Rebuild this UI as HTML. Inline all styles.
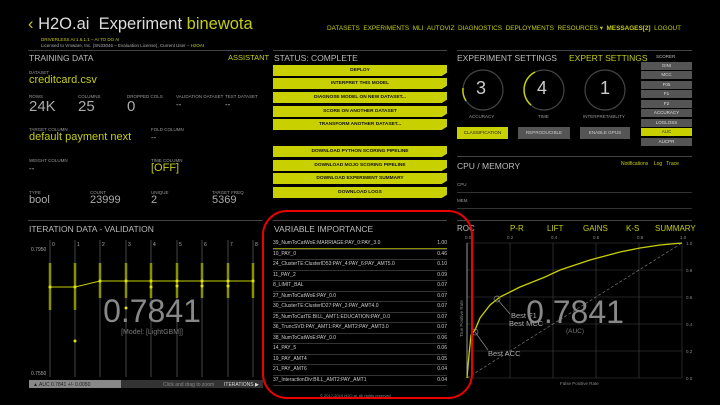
<!DOCTYPE html>
<html><head><meta charset="utf-8"><style>
*{margin:0;padding:0;box-sizing:border-box}
body{width:720px;height:405px;background:#000;overflow:hidden;position:relative;font-family:"Liberation Sans",sans-serif;color:#bbb}
.a{position:absolute;white-space:nowrap}
.y{color:#c5cc14}
.t{font-size:4.5px;color:#999}
.v{font-size:15px;color:#aaa}
.h{font-size:8.5px;color:#bbb}
.sep{position:absolute;height:1px;background:#444}
.btn{position:absolute;left:273px;width:174px;height:11px;background:#c8d000;color:#111;font-size:4.8px;font-weight:bold;text-align:center;line-height:11px;clip-path:polygon(0 0,100% 0,100% 70%,97% 100%,0 100%)}
.sc{position:absolute;left:641px;width:51px;height:8px;background:#555;color:#ddd;font-size:4.5px;text-align:center;line-height:8px}
.vr{position:absolute;left:273px;width:174px;font-size:5px;color:#ccc;border-bottom:1px solid #333;height:10.5px;line-height:9px}
.vr span{position:absolute;right:0}
</style></head><body>
<div class="a" style="left:28px;top:15px;font-size:16.5px;color:#ddd"><span class="y">‹</span> H2O.ai &nbsp;Experiment <span class="y">binewota</span></div>
<div class="a y" style="left:41px;top:37px;font-size:4.5px">DRIVERLESS AI 1.6.1.1 – AI TO DO AI</div>
<div class="a" style="left:41px;top:43px;font-size:4.5px;color:#aaa">Licensed to Vmware, Inc. (SN33046 – Evaluation License), Current User – <span class="y">H2OAI</span></div>
<div class="a y" style="left:327px;top:24px;font-size:6.4px">DATASETS &nbsp;EXPERIMENTS &nbsp;MLI &nbsp;AUTOVIZ &nbsp;DIAGNOSTICS &nbsp;DEPLOYMENTS &nbsp;RESOURCES ▾ &nbsp;<b>MESSAGES[2]</b> &nbsp;LOGOUT</div>

<div class="sep" style="left:28px;top:50px;width:235px"></div>
<div class="a h" style="left:29px;top:53px">TRAINING DATA</div>
<div class="a y" style="left:228px;top:53px;font-size:7.5px">ASSISTANT</div>
<div class="a t" style="left:29px;top:70px">DATASET</div>
<div class="a y" style="left:29px;top:74px;font-size:11px">creditcard.csv</div>
<div class="a t" style="left:29px;top:94px">ROWS</div><div class="a v" style="left:29px;top:98px">24K</div>
<div class="a t" style="left:78px;top:94px">COLUMNS</div><div class="a v" style="left:78px;top:98px">25</div>
<div class="a t" style="left:127px;top:94px">DROPPED COLS</div><div class="a v y" style="left:127px;top:98px">0</div>
<div class="a t" style="left:176px;top:94px">VALIDATION DATASET</div><div class="a" style="left:176px;top:100px;font-size:8px">--</div>
<div class="a t" style="left:225px;top:94px">TEST DATASET</div><div class="a" style="left:225px;top:100px;font-size:8px">--</div>
<div class="a t" style="left:29px;top:127px">TARGET COLUMN</div>
<div class="a y" style="left:29px;top:131px;font-size:11px">default payment next</div>
<div class="a t" style="left:151px;top:127px">FOLD COLUMN</div><div class="a" style="left:151px;top:133px;font-size:8px">--</div>
<div class="a t" style="left:29px;top:158px">WEIGHT COLUMN</div><div class="a" style="left:29px;top:164px;font-size:8px">--</div>
<div class="a t" style="left:151px;top:158px">TIME COLUMN</div><div class="a y" style="left:151px;top:162px;font-size:11px">[OFF]</div>
<div class="a t" style="left:29px;top:190px">TYPE</div><div class="a" style="left:29px;top:194px;font-size:11px;color:#aaa">bool</div>
<div class="a t" style="left:90px;top:190px">COUNT</div><div class="a" style="left:90px;top:194px;font-size:11px;color:#aaa">23999</div>
<div class="a t" style="left:151px;top:190px">UNIQUE</div><div class="a" style="left:151px;top:194px;font-size:11px;color:#aaa">2</div>
<div class="a t" style="left:212px;top:190px">TARGET FREQ</div><div class="a" style="left:212px;top:194px;font-size:11px;color:#aaa">5369</div>

<div class="sep" style="left:273px;top:50px;width:174px"></div>
<div class="a h" style="left:274px;top:53px">STATUS: COMPLETE</div>
<div class="btn" style="top:65px">DEPLOY</div>
<div class="btn" style="top:78px">INTERPRET THIS MODEL</div>
<div class="btn" style="top:92px">DIAGNOSE MODEL ON NEW DATASET...</div>
<div class="btn" style="top:106px">SCORE ON ANOTHER DATASET</div>
<div class="btn" style="top:119px">TRANSFORM ANOTHER DATASET...</div>
<div class="btn" style="top:146px">DOWNLOAD PYTHON SCORING PIPELINE</div>
<div class="btn" style="top:160px">DOWNLOAD MOJO SCORING PIPELINE</div>
<div class="btn" style="top:173px">DOWNLOAD EXPERIMENT SUMMARY</div>
<div class="btn" style="top:187px">DOWNLOAD LOGS</div>

<div class="sep" style="left:457px;top:50px;width:235px"></div>
<div class="a h" style="left:457px;top:53px">EXPERIMENT SETTINGS</div>
<div class="a y" style="left:569px;top:53px;font-size:8.5px">EXPERT SETTINGS</div>
<svg class="a" style="left:0;top:0" width="720" height="405">
<circle cx="483" cy="90" r="20" fill="none" stroke="#444" stroke-width="1.2"/>
<circle cx="544" cy="90" r="20" fill="none" stroke="#444" stroke-width="1.2"/>
<circle cx="605" cy="90" r="20" fill="none" stroke="#444" stroke-width="1.2"/>
<path d="M463 88 A20 20 0 0 0 466 101" fill="none" stroke="#c8d000" stroke-width="1.5"/>
<path d="M535 72 A20 20 0 0 0 531 105" fill="none" stroke="#c8d000" stroke-width="1.5"/>
</svg>
<div class="a" style="left:476px;top:78px;font-size:18px;color:#ccc">3</div>
<div class="a" style="left:537px;top:78px;font-size:18px;color:#ccc">4</div>
<div class="a" style="left:600px;top:78px;font-size:18px;color:#ccc">1</div>
<div class="a t" style="left:469px;top:114px">ACCURACY</div>
<div class="a t" style="left:538px;top:114px">TIME</div>
<div class="a t" style="left:583px;top:114px">INTERPRETABILITY</div>
<div class="a" style="left:457px;top:127px;width:51px;height:12px;background:#c8d000;color:#222;font-size:4.6px;text-align:center;line-height:12px">CLASSIFICATION</div>
<div class="a" style="left:518px;top:127px;width:52px;height:12px;background:#555;color:#ccc;font-size:4.6px;text-align:center;line-height:12px">REPRODUCIBLE</div>
<div class="a" style="left:580px;top:127px;width:50px;height:12px;background:#555;color:#ccc;font-size:4.6px;text-align:center;line-height:12px">ENABLE GPUS</div>
<div class="a t" style="left:656px;top:54px;color:#bbb">SCORER</div>
<div class="sc" style="top:62px">GINI</div>
<div class="sc" style="top:71px">MCC</div>
<div class="sc" style="top:81px">F05</div>
<div class="sc" style="top:90px">F1</div>
<div class="sc" style="top:100px">F2</div>
<div class="sc" style="top:109px">ACCURACY</div>
<div class="sc" style="top:119px">LOGLOSS</div>
<div class="sc" style="top:128px;background:#c8d000;color:#333">AUC</div>
<div class="sc" style="top:138px">AUCPR</div>

<div class="sep" style="left:457px;top:156px;width:235px"></div>
<div class="a h" style="left:457px;top:161px">CPU / MEMORY</div>
<div class="a y" style="left:621px;top:161px;font-size:5px">Notifications &nbsp;&nbsp;&nbsp;Log &nbsp;&nbsp;Trace</div>
<div class="a t" style="left:457px;top:182px">CPU</div>
<div class="sep" style="left:457px;top:192px;width:235px;background:#333"></div>
<div class="a t" style="left:457px;top:198px">MEM</div>
<div class="sep" style="left:457px;top:208px;width:235px;background:#333"></div>

<div class="sep" style="left:28px;top:220px;width:235px"></div>
<div class="a h" style="left:29px;top:224px">ITERATION DATA - VALIDATION</div>
<div class="sep" style="left:273px;top:220px;width:174px"></div>
<div class="a h" style="left:274px;top:224px">VARIABLE IMPORTANCE</div>
<div class="sep" style="left:457px;top:220px;width:235px"></div>

<svg class="a" style="left:0;top:0" width="720" height="405">
<g stroke="#555" stroke-width="0.8">
<line x1="50" y1="240" x2="50" y2="377"/><line x1="75" y1="240" x2="75" y2="377"/><line x1="100" y1="240" x2="100" y2="377"/><line x1="126" y1="240" x2="126" y2="377"/><line x1="151" y1="240" x2="151" y2="377"/><line x1="177" y1="240" x2="177" y2="377"/><line x1="202" y1="240" x2="202" y2="377"/><line x1="228" y1="240" x2="228" y2="377"/><line x1="253" y1="240" x2="253" y2="377"/>
</g>
<g fill="#aaa" font-size="5" font-family="Liberation Sans">
<text x="52" y="246">0</text><text x="77" y="246">1</text><text x="102" y="246">2</text><text x="128" y="246">3</text><text x="153" y="246">4</text><text x="179" y="246">5</text><text x="204" y="246">6</text><text x="230" y="246">7</text><text x="255" y="246">8</text>
<text x="31" y="251">0.7950</text><text x="31" y="375">0.7550</text>
</g>
<g stroke="#8a8f00" stroke-width="2.5">
<line x1="50" y1="263" x2="50" y2="310"/><line x1="75" y1="263" x2="75" y2="310"/><line x1="100" y1="263" x2="100" y2="298"/><line x1="126" y1="263" x2="126" y2="298"/><line x1="151" y1="263" x2="151" y2="298"/><line x1="177" y1="263" x2="177" y2="298"/><line x1="202" y1="263" x2="202" y2="298"/><line x1="228" y1="263" x2="228" y2="298"/><line x1="253" y1="263" x2="253" y2="298"/>
</g>
<polyline points="50,287 75,287 100,281 126,281 151,281 177,281 202,281 228,281 253,281" fill="none" stroke="#c8d000" stroke-width="1"/>
<g fill="#e0e600"><circle cx="50" cy="287" r="1.5"/><circle cx="75" cy="287" r="1.5"/><circle cx="100" cy="281" r="1.5"/><circle cx="126" cy="281" r="1.5"/><circle cx="151" cy="281" r="1.5"/><circle cx="151" cy="287" r="1.5"/><circle cx="177" cy="281" r="1.5"/><circle cx="177" cy="286" r="1.5"/><circle cx="202" cy="281" r="1.5"/><circle cx="202" cy="286" r="1.5"/><circle cx="228" cy="281" r="1.5"/><circle cx="228" cy="286" r="1.5"/><circle cx="253" cy="281" r="1.5"/><circle cx="126" cy="308" r="1.5"/><circle cx="75" cy="341" r="1.5"/></g>
<text x="152" y="322" text-anchor="middle" font-size="32" fill="#888" font-family="Liberation Sans">0.7841</text>
<text x="152" y="334" text-anchor="middle" font-size="7" fill="#777" font-family="Liberation Sans">[Model: [LightGBM]]</text>
<rect x="29" y="380" width="92" height="8" fill="#888"/>
<rect x="121" y="380" width="142" height="8" fill="#333"/>
<text x="33" y="386" font-size="5" fill="#222" font-family="Liberation Sans">▲ AUC 0.7841 +/- 0.0050</text>
<text x="163" y="386" font-size="5" fill="#888" font-family="Liberation Sans">Click and drag to zoom</text>
<text x="224" y="386" font-size="5" fill="#ddd" font-family="Liberation Sans">ITERATIONS ▶</text>

<g stroke="#444" stroke-width="0.6">
<line x1="467" y1="243" x2="467" y2="378"/><line x1="510" y1="243" x2="510" y2="378"/><line x1="553" y1="243" x2="553" y2="378"/><line x1="596" y1="243" x2="596" y2="378"/><line x1="639" y1="243" x2="639" y2="378"/><line x1="682" y1="243" x2="682" y2="378"/>
<line x1="467" y1="243" x2="682" y2="243"/><line x1="467" y1="270" x2="682" y2="270"/><line x1="467" y1="297" x2="682" y2="297"/><line x1="467" y1="324" x2="682" y2="324"/><line x1="467" y1="351" x2="682" y2="351"/><line x1="467" y1="378" x2="682" y2="378"/>
</g>
<line x1="467" y1="378" x2="682" y2="243" stroke="#777" stroke-width="0.7" stroke-dasharray="3,2"/>
<line x1="467" y1="243" x2="467" y2="378" stroke="#999" stroke-width="1"/>
<polyline points="467,378 469,355 471,335 475,330 480,318 490,305 500,297 510,292 520,287 530,283 545,277 560,270 575,265 590,260 605,256 620,252 640,248 660,245 682,243" fill="none" stroke="#c8d000" stroke-width="1.3"/>
<circle cx="475" cy="332" r="3" fill="none" stroke="#888" stroke-width="0.7"/>
<circle cx="497" cy="299" r="3" fill="none" stroke="#888" stroke-width="0.7"/>
<line x1="497" y1="299" x2="510" y2="314" stroke="#888" stroke-width="0.7"/>
<line x1="475" y1="332" x2="488" y2="350" stroke="#888" stroke-width="0.7"/>
<g fill="#aaa" font-family="Liberation Sans" font-size="7.5"><text x="511" y="318">Best F1</text><text x="509" y="326">Best MCC</text><text x="488" y="356">Best ACC</text></g>
<text x="575" y="323" text-anchor="middle" font-size="32" fill="#888" font-family="Liberation Sans">0.7841</text>
<text x="575" y="333" text-anchor="middle" font-size="6.5" fill="#777" font-family="Liberation Sans">(AUC)</text>
<g fill="#888" font-size="4.5" font-family="Liberation Sans">
<text x="465" y="239">0.0</text><text x="507" y="239">0.2</text><text x="551" y="239">0.4</text><text x="593" y="239">0.6</text><text x="637" y="239">0.8</text><text x="680" y="239">1.0</text>
<text x="686" y="245">1.0</text><text x="686" y="272">0.8</text><text x="686" y="299">0.6</text><text x="686" y="326">0.4</text><text x="686" y="353">0.2</text><text x="686" y="380">0.0</text>
<text x="560" y="385">False Positive Rate</text>
<text transform="translate(463,337) rotate(-90)">True Positive Rate</text>
</g>
<g font-size="8" font-family="Liberation Sans" fill="#c5cc14"><text x="457" y="231" fill="#bbb">ROC</text><text x="510" y="231">P-R</text><text x="547" y="231">LIFT</text><text x="583" y="231">GAINS</text><text x="626" y="231">K-S</text><text x="655" y="231">SUMMARY</text></g>
<rect x="263" y="211" width="209" height="187" rx="24" fill="none" stroke="#e00" stroke-width="2"/>
</svg>

<div class="vr" style="top:239px">39_NumToCatWoE:MARRIAGE:PAY_0:PAY_3.0<span>1.00</span></div>
<div class="vr" style="top:249.5px">10_PAY_0<span>0.46</span></div>
<div class="vr" style="top:260px">24_ClusterTE:ClusterID53:PAY_4:PAY_6:PAY_AMT5.0<span>0.10</span></div>
<div class="vr" style="top:270.5px">11_PAY_2<span>0.09</span></div>
<div class="vr" style="top:281px">8_LIMIT_BAL<span>0.07</span></div>
<div class="vr" style="top:291.5px">27_NumToCatWoE:PAY_0.0<span>0.07</span></div>
<div class="vr" style="top:302px">30_ClusterTE:ClusterID27:PAY_2:PAY_AMT4.0<span>0.07</span></div>
<div class="vr" style="top:312.5px">25_NumToCatTE:BILL_AMT1:EDUCATION:PAY_0.0<span>0.07</span></div>
<div class="vr" style="top:323px">36_TruncSVD:PAY_AMT1:PAY_AMT2:PAY_AMT3.0<span>0.07</span></div>
<div class="vr" style="top:333.5px">38_NumToCatWoE:PAY_0.0<span>0.06</span></div>
<div class="vr" style="top:344px">14_PAY_5<span>0.06</span></div>
<div class="vr" style="top:354.5px">19_PAY_AMT4<span>0.05</span></div>
<div class="vr" style="top:365px">21_PAY_AMT6<span>0.04</span></div>
<div class="vr" style="top:375.5px">37_InteractionDiv:BILL_AMT2:PAY_AMT1<span>0.04</span></div>
<div class="a" style="left:273px;top:248px;width:174px;height:1px;background:#8a8f00"></div>
<div class="a" style="left:320px;top:393px;font-size:4px;color:#888">© 2017-2019 H2O.ai. All rights reserved</div>
</body></html>
